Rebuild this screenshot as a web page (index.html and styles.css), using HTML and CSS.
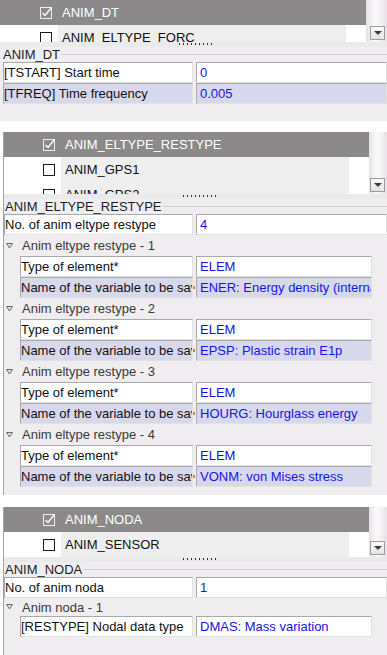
FILE: index.html
```html
<!DOCTYPE html>
<html lang="en">
<head>
    <meta charset="UTF-8">
    <title>Animation output</title>
    <link rel="stylesheet" href="styles.css">
</head>
<body>

    <div class="panel" id="panel-dt">
        <div class="list">
            <div class="list-rows">
                <div class="item selected">
                    <span class="check-col"><svg class="cb-on" width="13" height="13" viewBox="0 0 13 13"><rect x="0.5" y="1.5" width="11" height="11" fill="none" stroke="#ececec"/><path d="M2.5 7 L5 9.5 L11.5 1.5" fill="none" stroke="#fff" stroke-width="1.3"/></svg></span>
                    <span class="item-name">ANIM_DT</span>
                </div>
                <div class="item">
                    <span class="check-col"><span class="cb"></span></span>
                    <span class="item-name">ANIM_ELTYPE_FORC</span>
                </div>
            </div>
            <div class="scrollbar"><div class="sb-down"></div></div>
        </div>
        <div class="splitter"><span class="grip"></span></div>
        <div class="group-title">ANIM_DT</div>
        <div class="prop-row">
            <div class="cell label">[TSTART] Start time</div>
            <div class="cell value">0</div>
        </div>
        <div class="prop-row alt">
            <div class="cell label">[TFREQ] Time frequency</div>
            <div class="cell value">0.005</div>
        </div>
    </div>

    <div class="panel panel-framed" id="panel-restype">
        <div class="list">
            <div class="list-rows">
                <div class="item selected">
                    <span class="check-col"><svg class="cb-on" width="13" height="13" viewBox="0 0 13 13"><rect x="0.5" y="1.5" width="11" height="11" fill="none" stroke="#ececec"/><path d="M2.5 7 L5 9.5 L11.5 1.5" fill="none" stroke="#fff" stroke-width="1.3"/></svg></span>
                    <span class="item-name">ANIM_ELTYPE_RESTYPE</span>
                </div>
                <div class="item">
                    <span class="check-col"><span class="cb"></span></span>
                    <span class="item-name">ANIM_GPS1</span>
                </div>
                <div class="item">
                    <span class="check-col"><span class="cb"></span></span>
                    <span class="item-name">ANIM_GPS2</span>
                </div>
            </div>
            <div class="scrollbar"><div class="sb-down"></div></div>
        </div>
        <div class="splitter"><span class="grip"></span></div>
        <div class="group-title">ANIM_ELTYPE_RESTYPE</div>
        <div class="prop-row">
            <div class="cell label">No. of anim eltype restype</div>
            <div class="cell value">4</div>
        </div>

        <div class="tree-head"><svg width="7" height="6" viewBox="0 0 7 6"><path d="M0.5 0.5 H6.5 L3.5 5 Z" fill="#e4e2e4" stroke="#6a6a6a"/></svg>Anim eltype restype - 1</div>
        <div class="prop-row sub">
            <div class="cell label">Type of element*</div>
            <div class="cell value">ELEM</div>
        </div>
        <div class="prop-row sub alt">
            <div class="cell label">Name of the variable to be saved</div>
            <div class="cell value combo"><span>ENER: Energy density (internal)</span></div>
        </div>

        <div class="tree-head"><svg width="7" height="6" viewBox="0 0 7 6"><path d="M0.5 0.5 H6.5 L3.5 5 Z" fill="#e4e2e4" stroke="#6a6a6a"/></svg>Anim eltype restype - 2</div>
        <div class="prop-row sub">
            <div class="cell label">Type of element*</div>
            <div class="cell value">ELEM</div>
        </div>
        <div class="prop-row sub alt">
            <div class="cell label">Name of the variable to be saved</div>
            <div class="cell value combo"><span>EPSP: Plastic strain E1p</span></div>
        </div>

        <div class="tree-head"><svg width="7" height="6" viewBox="0 0 7 6"><path d="M0.5 0.5 H6.5 L3.5 5 Z" fill="#e4e2e4" stroke="#6a6a6a"/></svg>Anim eltype restype - 3</div>
        <div class="prop-row sub">
            <div class="cell label">Type of element*</div>
            <div class="cell value">ELEM</div>
        </div>
        <div class="prop-row sub alt">
            <div class="cell label">Name of the variable to be saved</div>
            <div class="cell value combo"><span>HOURG: Hourglass energy</span></div>
        </div>

        <div class="tree-head"><svg width="7" height="6" viewBox="0 0 7 6"><path d="M0.5 0.5 H6.5 L3.5 5 Z" fill="#e4e2e4" stroke="#6a6a6a"/></svg>Anim eltype restype - 4</div>
        <div class="prop-row sub">
            <div class="cell label">Type of element*</div>
            <div class="cell value">ELEM</div>
        </div>
        <div class="prop-row sub alt">
            <div class="cell label">Name of the variable to be saved</div>
            <div class="cell value combo"><span>VONM: von Mises stress</span></div>
        </div>
    </div>

    <div class="panel panel-framed" id="panel-noda">
        <div class="list">
            <div class="list-rows">
                <div class="item selected">
                    <span class="check-col"><svg class="cb-on" width="13" height="13" viewBox="0 0 13 13"><rect x="0.5" y="1.5" width="11" height="11" fill="none" stroke="#ececec"/><path d="M2.5 7 L5 9.5 L11.5 1.5" fill="none" stroke="#fff" stroke-width="1.3"/></svg></span>
                    <span class="item-name">ANIM_NODA</span>
                </div>
                <div class="item">
                    <span class="check-col"><span class="cb"></span></span>
                    <span class="item-name">ANIM_SENSOR</span>
                </div>
            </div>
            <div class="scrollbar"><div class="sb-down"></div></div>
        </div>
        <div class="splitter"><span class="grip"></span></div>
        <div class="group-title">ANIM_NODA</div>
        <div class="prop-row">
            <div class="cell label">No. of anim noda</div>
            <div class="cell value">1</div>
        </div>
        <div class="tree-head short"><svg width="7" height="6" viewBox="0 0 7 6"><path d="M0.5 0.5 H6.5 L3.5 5 Z" fill="#e4e2e4" stroke="#6a6a6a"/></svg>Anim noda - 1</div>
        <div class="prop-row sub">
            <div class="cell label">[RESTYPE] Nodal data type</div>
            <div class="cell value">DMAS: Mass variation</div>
        </div>
    </div>

</body>
</html>
```

FILE: styles.css
```css
body {
    margin: 0;
    background: #fff;
    font-family: "Liberation Sans", Arial, sans-serif;
    font-size: 13px;
    color: #111;
}
.panel {
    width: 387px;
    box-sizing: border-box;
    background: #efedef;
    overflow: hidden;
}
.panel-framed {
    width: 384px;
    margin-left: 3px;
    border-left: 1px solid #a3a3a3;
}
#panel-dt {
    height: 121px;
}
#panel-restype {
    height: 363px;
    margin-top: 11px;
}
#panel-noda {
    height: 148px;
    margin-top: 12px;
}

/* checklist on top of each panel */
.list {
    display: flex;
    background: #fff;
    overflow: hidden;
}
#panel-dt .list { height: 42px; }
#panel-restype .list { height: 62px; }
#panel-noda .list { height: 50px; }
.list-rows {
    flex: 1;
}
.item {
    display: flex;
    height: 25px;
}
.item.selected {
    background: #8b8989;
    color: #fff;
}
.check-col {
    flex: none;
    width: 58px;
    box-sizing: border-box;
    padding-right: 6px;
    display: flex;
    align-items: center;
    justify-content: flex-end;
}
.panel-framed .check-col {
    width: 57px;
}
.cb {
    width: 12px;
    height: 12px;
    box-sizing: border-box;
    border: 1px solid #1c1c1c;
    background: #fff;
}
.cb-on {
    margin-right: -1px;
}
.item-name {
    flex: 1;
    margin-right: 20px;
    padding-left: 4px;
    line-height: 25px;
    background: #eeeeee;
    white-space: nowrap;
    overflow: hidden;
}
.selected .item-name {
    background: transparent;
}
.scrollbar {
    flex: none;
    width: 21px;
    display: flex;
    flex-direction: column;
    justify-content: flex-end;
    background: linear-gradient(90deg, #e4e2e4 0%, #fbf9fb 40%, #f4f0f3 70%, #e6e0e4 100%);
}
.panel-framed .scrollbar {
    width: 18px;
}
.sb-down {
    width: 15px;
    height: 14px;
    box-sizing: border-box;
    margin: 0 2px 2px auto;
    border: 1px solid #9d9d9d;
    background: linear-gradient(#fbfbfb, #e3e3e3);
    display: flex;
    align-items: center;
    justify-content: center;
}
.sb-down::after {
    content: "";
    border-left: 4px solid transparent;
    border-right: 4px solid transparent;
    border-top: 4px solid #3c3c3c;
}
.splitter {
    height: 5px;
    background: #ebeaeb;
}
.grip {
    display: block;
    width: 33px;
    height: 2px;
    margin-left: 179px;
    padding-top: 0;
    border-top: 1px solid transparent;
    background: repeating-linear-gradient(90deg, #333 0 1px, transparent 1px 4px);
    background-clip: content-box;
}

/* property editor */
.group-title {
    display: flex;
    align-items: center;
    height: 15px;
    padding-left: 3px;
    color: #1e1e1e;
}
.panel-framed .group-title {
    padding-left: 1px;
}
.group-title::after {
    content: "";
    flex: 1;
    margin-left: 1px;
    border-top: 1px solid #d3d1d3;
}
.prop-row {
    display: grid;
    grid-template-columns: 1fr 191px;
    column-gap: 3px;
    padding-left: 3px;
}
.panel-framed .prop-row {
    padding-left: 0;
}
.panel-framed .prop-row.sub,
.prop-row.sub {
    padding-left: 16px;
    padding-right: 15px;
    grid-template-columns: 1fr 176px;
}
.cell {
    height: 21px;
    box-sizing: border-box;
    border: 1px solid;
    border-color: #aaaaaa #e2e2e2 #e2e2e2 #aaaaaa;
    background: #fff;
    line-height: 19px;
    white-space: nowrap;
    overflow: hidden;
}
.value {
    padding-left: 3px;
    color: #1414f0;
}
.alt .cell {
    background: #d8d8ed;
}
.combo {
    position: relative;
    overflow: visible;
}
.combo span {
    display: block;
    overflow: hidden;
}
.combo::before {
    content: "";
    position: absolute;
    left: -4px;
    top: 8px;
    width: 2px;
    height: 3px;
    background: #d9892b;
}
.tree-head {
    display: flex;
    align-items: center;
    height: 21px;
    padding-left: 2px;
    color: #3a3a3a;
}
.tree-head svg {
    margin-right: 9px;
}
.tree-head.short {
    height: 18px;
}
```
